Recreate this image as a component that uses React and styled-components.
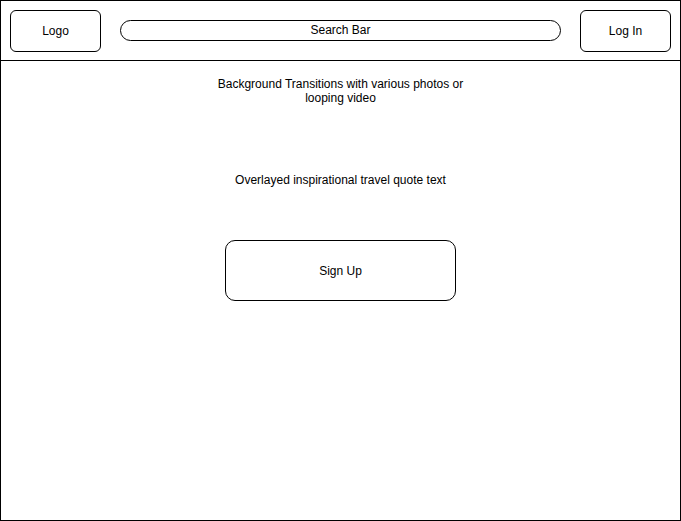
import React from 'react';
import styled, { createGlobalStyle } from 'styled-components';

const GlobalStyle = createGlobalStyle`
  html, body {
    margin: 0;
    padding: 0;
    background: #fff;
  }
  * {
    box-sizing: border-box;
  }
`;

const Frame = styled.div`
  width: 681px;
  height: 521px;
  border: 1px solid #000;
  display: flex;
  flex-direction: column;
  font-family: "Liberation Sans", Arial, sans-serif;
  font-size: 12px;
  color: #000;
`;

const Header = styled.header`
  height: 60px;
  flex-shrink: 0;
  display: flex;
  align-items: center;
  padding: 0 9px 0 9px;
  border-bottom: 1px solid #000;
`;

const BoxButton = styled.div`
  width: 91px;
  height: 42px;
  flex-shrink: 0;
  border: 1px solid #000;
  border-radius: 6px;
  display: flex;
  align-items: center;
  justify-content: center;
`;

const SearchBar = styled.div`
  flex: 1;
  height: 21px;
  margin: 0 19px 1px 19px;
  border: 1px solid #000;
  border-radius: 11px;
  display: flex;
  align-items: center;
  justify-content: center;
`;

const Hero = styled.main`
  flex: 1;
  display: flex;
  flex-direction: column;
  align-items: center;
  padding-top: 16px;
  text-align: center;
  line-height: 14px;
`;

const Caption = styled.p`
  margin: 0;
  max-width: 260px;
`;

const Quote = styled.p`
  margin: 68px 0 0;
`;

const SignUp = styled.div`
  margin-top: 53px;
  width: 231px;
  height: 61px;
  border: 1px solid #000;
  border-radius: 10px;
  display: flex;
  align-items: center;
  justify-content: center;
`;

export default function App() {
  return (
    <>
      <GlobalStyle />
      <Frame>
        <Header>
          <BoxButton>Logo</BoxButton>
          <SearchBar>Search Bar</SearchBar>
          <BoxButton>Log In</BoxButton>
        </Header>
        <Hero>
          <Caption>Background Transitions with various photos or looping video</Caption>
          <Quote>Overlayed inspirational travel quote text</Quote>
          <SignUp>Sign Up</SignUp>
        </Hero>
      </Frame>
    </>
  );
}
